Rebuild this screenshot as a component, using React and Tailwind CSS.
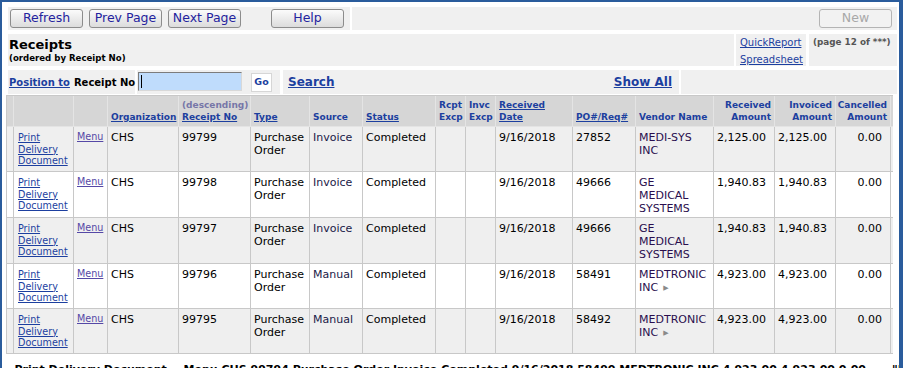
import React from "react";

const GRID =
  "grid grid-cols-[7px_60px_34px_71px_72px_59px_53px_73px_30px_30px_77px_63px_78px_61px_61px_55px_60px]";

const LINK = "text-[#1c3f9f] underline";

function Btn({ children, disabled }) {
  return (
    <div
      className={
        "h-[19px] w-[73px] rounded-[3px] border flex items-center justify-center text-[12.5px] leading-none " +
        (disabled
          ? "border-[#b4b4b4] bg-[#f2f2f2] text-[#a8a8a8]"
          : "border-[#8c8c8c] bg-linear-to-b from-[#fbfbfb] to-[#dcdcdc] text-[#23239e]")
      }
    >
      {children}
    </div>
  );
}

function H({ children, right }) {
  return (
    <div
      className={
        "border-r border-b border-[#e4e4e4] flex flex-col justify-end px-[3px] pb-[3px] text-[9px] leading-[12px] font-bold text-[#1c3f9f] whitespace-nowrap overflow-hidden " +
        (right ? "items-end text-right" : "")
      }
    >
      {children}
    </div>
  );
}

const DATA = "pl-[3px] pr-[3px] pt-[4px] text-[11px] leading-[13px]";
const NUM = "pl-[3px] pr-[8px] pt-[4px] text-[11px] leading-[13px] text-right";

function C({ children, cls = DATA }) {
  return (
    <div className={"border-r border-b border-[#c8c8c8] whitespace-nowrap overflow-hidden " + cls}>
      {children}
    </div>
  );
}

const rows = [
  { no: "99799", src: "Invoice", po: "27852", vendor: ["MEDI-SYS", "INC"], amt: "2,125.00", bg: "bg-[#efefef]", h: "h-[45px]" },
  { no: "99798", src: "Invoice", po: "49666", vendor: ["GE", "MEDICAL", "SYSTEMS"], amt: "1,940.83", bg: "bg-white", h: "h-[46px]" },
  { no: "99797", src: "Invoice", po: "49666", vendor: ["GE", "MEDICAL", "SYSTEMS"], amt: "1,940.83", bg: "bg-[#efefef]", h: "h-[46px]" },
  { no: "99796", src: "Manual", po: "58491", vendor: ["MEDTRONIC", "INC"], arrow: true, amt: "4,923.00", bg: "bg-white", h: "h-[45px]" },
  { no: "99795", src: "Manual", po: "58492", vendor: ["MEDTRONIC", "INC"], arrow: true, amt: "4,923.00", bg: "bg-[#efefef]", h: "h-[45px]" },
];

export default function App() {
  return (
    <div className="h-[368px] overflow-hidden bg-white border-t-2 border-l-2 border-r-4 border-[#2a5c9c] font-['DejaVu_Sans',sans-serif] text-black">
      <div className="pl-[4px] pr-[2px] pt-[5px]">
        {/* toolbar */}
        <div className="flex gap-[2px] ml-[2px]">
          <div className="w-[342px] h-[23px] bg-[#f0f0f0] flex items-start pt-[2px] pl-[2px]">
            <Btn>Refresh</Btn>
            <div className="ml-[6px]"><Btn>Prev Page</Btn></div>
            <div className="ml-[6px]"><Btn>Next Page</Btn></div>
            <div className="ml-[30px]"><Btn>Help</Btn></div>
          </div>
          <div className="flex-1 h-[23px] bg-[#f0f0f0] flex justify-end pt-[2px] pr-[5px]">
            <Btn disabled>New</Btn>
          </div>
        </div>

        {/* title */}
        <div className="flex mt-[4px] ml-[2px] h-[32px]">
          <div className="w-[726px] bg-[#f0f0f0] pl-[1px] pt-[3px] font-bold">
            <div className="text-[13px] leading-[16px]">Receipts</div>
            <div className="text-[8.6px] leading-[11px]">(ordered by Receipt No)</div>
          </div>
          <div className="ml-[2px] w-[70px] bg-[#f0f0f0] pl-[4px] text-[10px] leading-[17px]">
            <div className={LINK}>QuickReport</div>
            <div className={LINK}>Spreadsheet</div>
          </div>
          <div className="ml-[3px] flex-1 bg-[#f0f0f0] pl-[4px] text-[8.8px] leading-[17px] font-bold text-[#555555]">
            (page 12 of ***)
          </div>
        </div>

        {/* position row */}
        <div className="flex mt-[4px] ml-[2px] h-[24px]">
          <div className="w-[127px] bg-[#f0f0f0] flex items-center pl-[1px] text-[10px] font-bold whitespace-nowrap">
            <span className={LINK}>Position to</span>
            <span className="ml-[4px]">Receipt No</span>
          </div>
          <div className="ml-[2px] w-[143px] bg-[#f0f0f0] flex items-start">
            <div className="ml-[1px] mt-[2px] w-[104px] h-[19px] bg-[#bfdcfc] border border-[#7c7c7c] border-r-[#d8d8d8] border-b-[#d8d8d8] relative">
              <div className="absolute left-[2px] top-[2px] w-[1px] h-[13px] bg-black"></div>
            </div>
            <div className="ml-[9px] mt-[3px] w-[21px] h-[19px] bg-white border border-[#d6d6d6] flex items-center justify-center text-[9.5px] font-bold text-[#1c3f9f]">
              Go
            </div>
          </div>
          <div className="ml-[3px] w-[396px] bg-[#f0f0f0] flex items-center justify-between pl-[5px] pr-[7px] text-[12px] font-bold">
            <span className={LINK}>Search</span>
            <span className={LINK}>Show All</span>
          </div>
          <div className="ml-[2px] flex-1 bg-[#f0f0f0]"></div>
        </div>

        {/* table */}
        <div className="mt-[1px] w-[887px] overflow-hidden">
          <div className="w-max border-l border-t border-[#c8c8c8]">
            <div className={GRID + " h-[31px] bg-[#d6d6d6]"}>
              <H></H>
              <H></H>
              <H></H>
              <H><span className="underline">Organization</span></H>
              <H>
                <span className="text-[#7676a8]">(descending)</span>
                <span className="underline">Receipt No</span>
              </H>
              <H><span className="underline">Type</span></H>
              <H>Source</H>
              <H><span className="underline">Status</span></H>
              <H><span>Rcpt</span><span>Excp</span></H>
              <H><span>Invc</span><span>Excp</span></H>
              <H><span className="underline">Received</span><span className="underline">Date</span></H>
              <H><span className="underline">PO#/Req#</span></H>
              <H>Vendor Name</H>
              <H right><span>Received</span><span>Amount</span></H>
              <H right><span>Invoiced</span><span>Amount</span></H>
              <H right><span>Cancelled</span><span>Amount</span></H>
              <H></H>
            </div>
            {rows.map((r) => (
              <div key={r.no} className={GRID + " " + r.h + " " + r.bg}>
                <C></C>
                <C cls="pl-[4px] pr-[1px] pt-[5px] text-[9.6px] leading-[11.5px]">
                  <div className={LINK}>Print</div>
                  <div className={LINK}>Delivery</div>
                  <div className={LINK}>Document</div>
                </C>
                <C cls="pl-[3px] pr-[1px] pt-[4px] text-[9.6px] leading-[12px]">
                  <span className="text-[#5548a6] underline">Menu</span>
                </C>
                <C>CHS</C>
                <C>{r.no}</C>
                <C>
                  <div>Purchase</div>
                  <div>Order</div>
                </C>
                <C cls={DATA + " text-[#1a1a48]"}>{r.src}</C>
                <C>Completed</C>
                <C></C>
                <C></C>
                <C>9/16/2018</C>
                <C>{r.po}</C>
                <C cls={DATA + " text-[#2a0e4e]"}>
                  {r.vendor.map((v, i) => (
                    <div key={i}>
                      {v}
                      {r.arrow && i === r.vendor.length - 1 ? (
                        <span className="ml-[5px] text-[7px] text-[#8a8a8a] align-[1px]">▶</span>
                      ) : null}
                    </div>
                  ))}
                </C>
                <C cls={NUM}>{r.amt}</C>
                <C cls={NUM}>{r.amt}</C>
                <C cls={NUM}>0.00</C>
                <C></C>
              </div>
            ))}
          </div>
        </div>

        <div className="mt-[9px] text-[11px] leading-[13px] font-bold whitespace-nowrap">
          - Print Delivery Document -- Menu CHS 99794 Purchase Order Invoice Completed 9/16/2018 58490 MEDTRONIC INC 4,923.00 4,923.00 0.00 ---- ""
        </div>
      </div>
    </div>
  );
}
